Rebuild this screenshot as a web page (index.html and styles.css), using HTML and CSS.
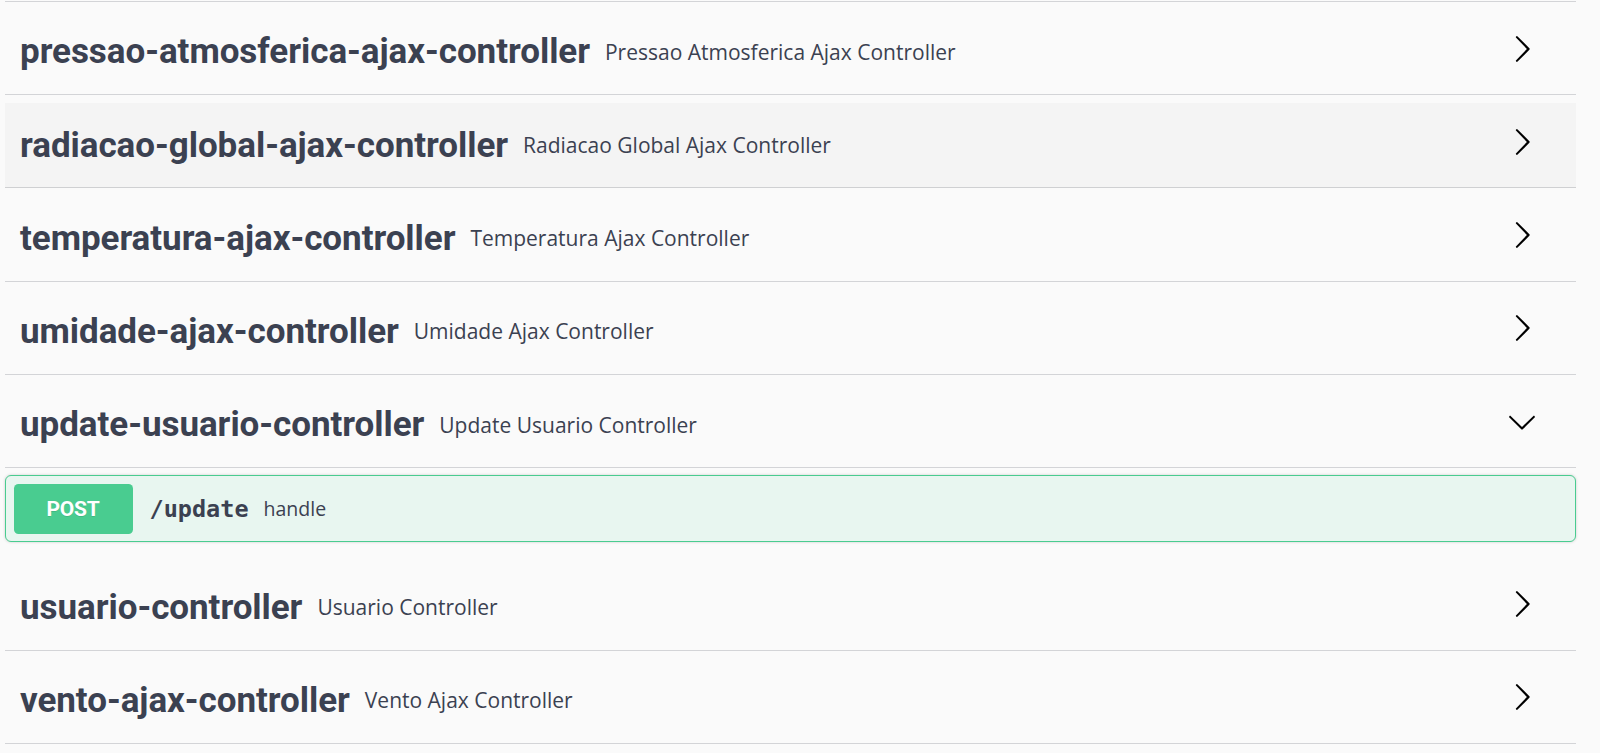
FILE: index.html
```html
<!DOCTYPE html>
<html lang="pt">
<head>
<meta charset="utf-8">
<title>Swagger UI</title>
<link rel="stylesheet" href="styles.css">
</head>
<body>
<div class="wrapper">
  <div class="edge"></div>

  <section class="tag-section">
    <h4 class="opblock-tag">
      <a class="tag-name">pressao-atmosferica-ajax-controller</a>
      <small class="tag-desc">Pressao Atmosferica Ajax Controller</small>
      <button class="expand" aria-label="expand"><svg viewBox="0 0 20 20" width="30" height="30"><path d="M13.25 10L6.109 2.58a.697.697 0 0 1 0-.979.68.68 0 0 1 .969 0l7.83 7.908a.697.697 0 0 1 0 .979l-7.830 7.908a.68.68 0 0 1-.969 0 .697.697 0 0 1 0-.979L13.25 10z"/></svg></button>
    </h4>
  </section>

  <section class="tag-section">
    <h4 class="opblock-tag is-hover">
      <a class="tag-name">radiacao-global-ajax-controller</a>
      <small class="tag-desc">Radiacao Global Ajax Controller</small>
      <button class="expand" aria-label="expand"><svg viewBox="0 0 20 20" width="30" height="30"><path d="M13.25 10L6.109 2.58a.697.697 0 0 1 0-.979.68.68 0 0 1 .969 0l7.83 7.908a.697.697 0 0 1 0 .979l-7.830 7.908a.68.68 0 0 1-.969 0 .697.697 0 0 1 0-.979L13.25 10z"/></svg></button>
    </h4>
  </section>

  <section class="tag-section">
    <h4 class="opblock-tag">
      <a class="tag-name">temperatura-ajax-controller</a>
      <small class="tag-desc">Temperatura Ajax Controller</small>
      <button class="expand" aria-label="expand"><svg viewBox="0 0 20 20" width="30" height="30"><path d="M13.25 10L6.109 2.58a.697.697 0 0 1 0-.979.68.68 0 0 1 .969 0l7.83 7.908a.697.697 0 0 1 0 .979l-7.830 7.908a.68.68 0 0 1-.969 0 .697.697 0 0 1 0-.979L13.25 10z"/></svg></button>
    </h4>
  </section>

  <section class="tag-section">
    <h4 class="opblock-tag">
      <a class="tag-name">umidade-ajax-controller</a>
      <small class="tag-desc">Umidade Ajax Controller</small>
      <button class="expand" aria-label="expand"><svg viewBox="0 0 20 20" width="30" height="30"><path d="M13.25 10L6.109 2.58a.697.697 0 0 1 0-.979.68.68 0 0 1 .969 0l7.83 7.908a.697.697 0 0 1 0 .979l-7.830 7.908a.68.68 0 0 1-.969 0 .697.697 0 0 1 0-.979L13.25 10z"/></svg></button>
    </h4>
  </section>

  <section class="tag-section is-open">
    <h4 class="opblock-tag">
      <a class="tag-name">update-usuario-controller</a>
      <small class="tag-desc">Update Usuario Controller</small>
      <button class="expand" aria-label="collapse"><svg viewBox="0 0 20 20" width="30" height="30"><path d="M17.418 6.109c.272-.268.709-.268.979 0s.271.701 0 .969l-7.908 7.83c-.27.268-.707.268-.979 0l-7.908-7.83c-.27-.268-.27-.701 0-.969.271-.268.709-.268.979 0L10 13.250l7.418-7.141z"/></svg></button>
    </h4>
    <div class="operations">
      <div class="opblock opblock-post">
        <div class="opblock-summary">
          <span class="method">POST</span>
          <span class="path">/update</span>
          <div class="summary-desc">handle</div>
        </div>
      </div>
    </div>
  </section>

  <section class="tag-section">
    <h4 class="opblock-tag">
      <a class="tag-name">usuario-controller</a>
      <small class="tag-desc">Usuario Controller</small>
      <button class="expand" aria-label="expand"><svg viewBox="0 0 20 20" width="30" height="30"><path d="M13.25 10L6.109 2.58a.697.697 0 0 1 0-.979.68.68 0 0 1 .969 0l7.83 7.908a.697.697 0 0 1 0 .979l-7.830 7.908a.68.68 0 0 1-.969 0 .697.697 0 0 1 0-.979L13.25 10z"/></svg></button>
    </h4>
  </section>

  <section class="tag-section">
    <h4 class="opblock-tag">
      <a class="tag-name">vento-ajax-controller</a>
      <small class="tag-desc">Vento Ajax Controller</small>
      <button class="expand" aria-label="expand"><svg viewBox="0 0 20 20" width="30" height="30"><path d="M13.25 10L6.109 2.58a.697.697 0 0 1 0-.979.68.68 0 0 1 .969 0l7.83 7.908a.697.697 0 0 1 0 .979l-7.830 7.908a.68.68 0 0 1-.969 0 .697.697 0 0 1 0-.979L13.25 10z"/></svg></button>
    </h4>
  </section>
</div>
</body>
</html>
```

FILE: styles.css
```css
* {
  box-sizing: border-box;
}

html, body {
  margin: 0;
  padding: 0;
  background: #fafafa;
  overflow: hidden;
}

body {
  color: #3b4151;
  font-family: "Open Sans", sans-serif;
}

.wrapper {
  margin: 0 24px 0 5px;
  display: flex;
  flex-direction: column;
}

.edge {
  height: 2px;
  border-bottom: 1px solid #d3d4d7;
}

.tag-section {
  display: flex;
  flex-direction: column;
}

.opblock-tag {
  margin: 7.5px 0 0 0;
  height: 85.7px;
  padding: 0 30px 0 15px;
  display: flex;
  align-items: center;
  border-bottom: 1px solid #d3d4d7;
}

.opblock-tag.is-hover {
  background: #f4f4f4;
  border-bottom-color: #cfd0d2;
}

.tag-name {
  font-family: Roboto, "Liberation Sans", sans-serif;
  font-weight: 700;
  font-size: 35px;
  color: #3b4151;
  letter-spacing: -0.05px;
  white-space: nowrap;
}

.tag-desc {
  flex: 1;
  padding: 0 15px;
  font-family: "Open Sans", sans-serif;
  font-weight: 400;
  font-size: 21px;
  color: #3b4151;
  white-space: nowrap;
}

.expand {
  border: none;
  background: none;
  padding: 0;
  margin: -6px 9px 0 0;
  width: 30px;
  height: 30px;
  display: flex;
}

.expand svg {
  fill: #000;
}

.operations {
  padding: 7.5px 0 15px;
}

.opblock {
  border-radius: 6px;
  box-shadow: 0 0 3px rgba(0, 0, 0, 0.19);
}

.opblock-post {
  border: 1px solid #49cc90;
  background: #e8f6f0;
}

.opblock-summary {
  padding: 7.5px;
  display: flex;
  align-items: center;
}

.method {
  width: 119px;
  height: 50px;
  border-radius: 4.5px;
  background: #49cc90;
  color: #fff;
  font-family: Roboto, "Liberation Sans", sans-serif;
  font-weight: 700;
  font-size: 21px;
  letter-spacing: -0.3px;
  display: flex;
  align-items: center;
  justify-content: center;
  text-shadow: 0 1px 0 rgba(0, 0, 0, 0.1);
}

.path {
  padding: 0 15px 0 17px;
  font-family: "DejaVu Sans Mono", "Liberation Mono", monospace;
  font-weight: 700;
  font-size: 23.5px;
  color: #3b4151;
}

.summary-desc {
  font-family: "Open Sans", sans-serif;
  font-weight: 400;
  font-size: 19.5px;
  color: #3b4151;
}
```
